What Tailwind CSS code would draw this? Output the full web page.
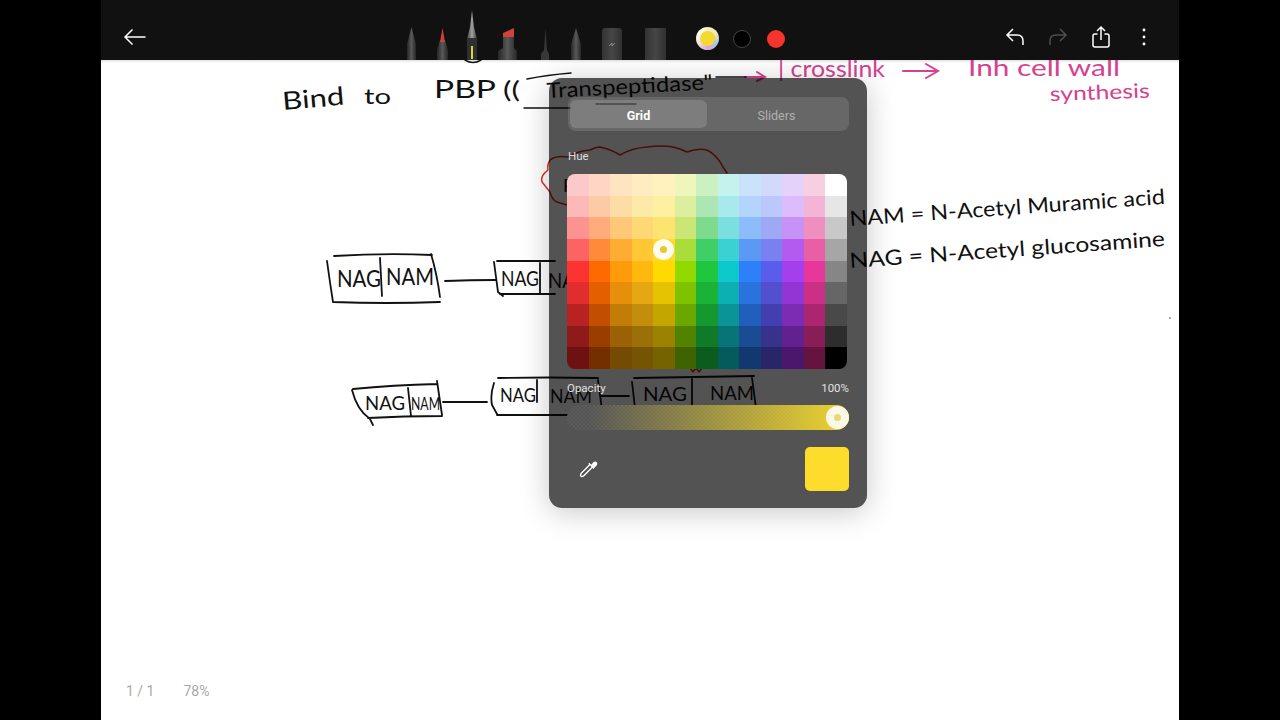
<!DOCTYPE html>
<html lang="en">
<head>
  <meta charset="UTF-8">
  <title>Notes - colour picker</title>
  <script src="https://cdn.jsdelivr.net/npm/@tailwindcss/browser@4"></script>
</head>
<body class="bg-black overflow-hidden [font-family:Roboto,sans-serif]">
  <div class="flex w-[1280px] h-[720px]">
    <div class="w-[101px] shrink-0"></div>
    <div class="w-[1078px] shrink-0 flex flex-col">

      <!-- top bar -->
      <header class="h-[60px] bg-[#111111] flex items-start relative z-10">
        <button class="mt-[25px] ml-[22px] w-[24px] h-6 text-white">
          <svg viewBox="0 0 24 24" class="w-6 h-6" fill="none" stroke="currentColor" stroke-width="1.500"><path d="M22.500 12H2M9.500 4.500 2 12l7.500 7.500"/></svg>
        </button>

        <!-- tools -->
        <svg class="absolute left-[300px] top-0 blur-[0.6px]" width="280" height="60" viewBox="401 0 280 60">
          <defs>
            <linearGradient id="metal" x1="0" x2="1" y1="0" y2="0"><stop offset="0" stop-color="#262626"/><stop offset=".5" stop-color="#585858"/><stop offset="1" stop-color="#262626"/></linearGradient>
            <linearGradient id="bright" x1="0" x2="1" y1="0" y2="0"><stop offset="0" stop-color="#444"/><stop offset=".5" stop-color="#a0a0a0"/><stop offset="1" stop-color="#3a3a3a"/></linearGradient>
            <linearGradient id="eraser" x1="0" x2="1" y1="0" y2="0"><stop offset="0" stop-color="#333"/><stop offset=".5" stop-color="#464646"/><stop offset="1" stop-color="#303030"/></linearGradient>
          </defs>
          <path d="M407 60V44L411.500 27 416 44V60Z" fill="url(#metal)"/>
          <path d="M437 60V50L440 40H445L448 50V60Z" fill="url(#metal)"/>
          <path d="M440 42 442.500 28 445 42Z" fill="#d0413c"/>
          <path d="M467 60V39L470 27 472 10 474 27 477 39V60Z" fill="url(#bright)"/>
          <path d="M467 38h10v22h-10Z" fill="#2f2f2f"/>
          <path d="M471 46h2v13h-2Z" fill="#d8cf4a"/>
          <path d="M498 60V51L503 48V36L514 29V48L517 51V60Z" fill="url(#metal)"/>
          <path d="M503 37V33L514 28V37Z" fill="#d2413a"/>
          <path d="M541 60V54L544 50 545.500 28 547 50 549 54V60Z" fill="#383838"/>
          <path d="M571 60V44L576 28 581 44V60Z" fill="url(#metal)"/>
          <rect x="602" y="28" width="20" height="36" rx="3" fill="url(#eraser)"/>
          <path d="M609 46l3-3v3l3-3" fill="none" stroke="#999" stroke-width=".8"/>
          <rect x="645" y="28" width="21" height="36" rx="1" fill="url(#eraser)"/>
        </svg>

        <!-- colours -->
        <div class="absolute left-[595px] top-[27px] flex items-center gap-[14px]">
          <div class="w-[23px] h-[23px] rounded-full bg-[conic-gradient(#f6f0c8,#f2e8b0,#a9c4e8,#d9a8d8,#f4e0d8,#ffffff,#f6f0c8)] flex items-center justify-center">
            <div class="w-[15px] h-[15px] rounded-full bg-[#f5d92e]"></div>
          </div>
          <div class="w-[18px] h-[18px] rounded-full bg-black border border-[#444444]"></div>
          <div class="ml-[2px] w-[18px] h-[18px] rounded-full bg-[#f5352c]"></div>
        </div>

        <!-- actions -->
        <div class="ml-auto flex items-center gap-[19px] mt-[25px] mr-[23px]">
          <svg viewBox="0 0 24 24" class="w-6 h-6 text-white" fill="none" stroke="currentColor" stroke-width="1.500"><path d="M10 4 4 10l6 6M4 10h10q6 0 6 6v4"/></svg>
          <svg viewBox="0 0 24 24" class="w-6 h-6 text-[#4e4e4e]" fill="none" stroke="currentColor" stroke-width="1.500"><path d="m14 4 6 6-6 6M20 10H10q-6 0-6 6v4"/></svg>
          <svg viewBox="0 0 24 24" class="w-6 h-6 text-white" fill="none" stroke="currentColor" stroke-width="1.500"><path d="M12 15V2M8 6l4-4 4 4M8.500 9H6q-2 0-2 2v9q0 2 2 2h12q2 0 2-2v-9q0-2-2-2h-2.500"/></svg>
          <svg viewBox="0 0 24 24" class="w-6 h-6 text-white" fill="currentColor"><circle cx="12" cy="5" r="1.400"/><circle cx="12" cy="12" r="1.400"/><circle cx="12" cy="19" r="1.400"/></svg>
        </div>
      </header>

      <!-- page -->
      <main class="relative flex-1 bg-white overflow-hidden">
        <div class="absolute inset-x-0 top-0 h-[3px] bg-gradient-to-b from-[#e2e2e2] to-white"></div>

        <svg class="absolute inset-0" width="1078" height="660" viewBox="101 60 1078 660" fill="none" stroke="#111" stroke-width="1.500" stroke-linecap="round">
          <g fill="#111" stroke="none" font-family="Lato, sans-serif">
            <text x="283" y="110" font-size="25" textLength="62" lengthAdjust="spacingAndGlyphs" transform="rotate(-5 283 110)">Bind</text>
            <text x="364" y="104" font-size="22" textLength="27" lengthAdjust="spacingAndGlyphs">to</text>
            <text x="434" y="98" font-size="25" textLength="62" lengthAdjust="spacingAndGlyphs">PBP</text>
            <text x="503" y="98" font-size="24" textLength="17" lengthAdjust="spacingAndGlyphs">((</text>
            <text x="547" y="98" font-size="21" textLength="166" lengthAdjust="spacingAndGlyphs" transform="rotate(-3 547 98)">Transpeptidase"</text>
            <text x="563" y="192" font-size="17" textLength="100" lengthAdjust="spacingAndGlyphs">Pentaglycine</text>
            <text x="337" y="287" font-size="24" textLength="44" lengthAdjust="spacingAndGlyphs">NAG</text>
            <text x="386" y="285" font-size="24" textLength="48" lengthAdjust="spacingAndGlyphs">NAM</text>
            <text x="501" y="286" font-size="21" textLength="38" lengthAdjust="spacingAndGlyphs">NAG</text>
            <text x="548" y="288" font-size="21" textLength="44" lengthAdjust="spacingAndGlyphs">NAM</text>
            <text x="365" y="410" font-size="19" textLength="40" lengthAdjust="spacingAndGlyphs">NAG</text>
            <text x="411" y="410" font-size="17" textLength="29" lengthAdjust="spacingAndGlyphs">NAM</text>
            <text x="500" y="402" font-size="19" textLength="36" lengthAdjust="spacingAndGlyphs">NAG</text>
            <text x="550" y="403" font-size="19" textLength="42" lengthAdjust="spacingAndGlyphs">NAM</text>
            <text x="643" y="401" font-size="20" textLength="44" lengthAdjust="spacingAndGlyphs">NAG</text>
            <text x="710" y="400" font-size="20" textLength="44" lengthAdjust="spacingAndGlyphs">NAM</text>
            <text x="850" y="226" font-size="21" textLength="316" lengthAdjust="spacingAndGlyphs" transform="rotate(-4 850 226)">NAM = N-Acetyl Muramic acid</text>
            <text x="850" y="268" font-size="21" textLength="316" lengthAdjust="spacingAndGlyphs" transform="rotate(-4 850 268)">NAG = N-Acetyl glucosamine</text>
          </g>
          <g fill="#d6418f" stroke="none" font-family="Lato, sans-serif">
            <text x="778" y="77" font-size="23" textLength="107" lengthAdjust="spacingAndGlyphs">| crosslink</text>
            <text x="968" y="76" font-size="24" textLength="152" lengthAdjust="spacingAndGlyphs">Inh cell wall</text>
            <text x="1050" y="101" font-size="20" textLength="100" lengthAdjust="spacingAndGlyphs" transform="rotate(-2 1050 101)">synthesis</text>
          </g>
          <!-- pink arrows -->
          <path d="M745 77h18M757 72l8 5-8 4M903 71h34M926 64l12 7-12 7" stroke="#d6418f" stroke-width="2"/>
          <!-- top line of the bracket -->
          <path d="M527 79q20-4 44-6M524 108h46M596 104h40M716 77h30M465 60q8 5 16 0"/>
          <!-- red cloud -->
          <path d="M568 157q-12-2-18 3-3 5-2 10-8 6-6 12 4 5 8 10 2 8 7 10l10 3M568 157q10-6 22-7 6-3 10-3 10 2 20 8 12-7 27-8 14-2 26 0 8 2 14 5 10-4 20-2 10 5 16 17l4 6" stroke="#e02a2a" stroke-width="1.500"/>
          <path d="M690 368l3 4 3-4 3 4 3-4" stroke="#e02a2a"/>
          <!-- first row of boxes -->
          <path d="M327 261q3 22 6 41M334 256q50-3 98-1M431 254q6 20 9 43M333 302q54 2 107 0M380 258l2 38M445 281q26-1 50-1M494 262l4 30 5 4M497 261h58M500 294h55M540 263v30" stroke-width="1.800"/>
          <!-- second row of boxes -->
          <path d="M352 390q5 20 18 29l3 6M353 389q40-4 84-5M437 381l5 34M368 418q36-2 74-2M408 388l3 28M443 402h44M494 383q-4 12-2 22l5 9M498 378q50-1 100 0M497 415h103M537 380v22M598 380l4 30M601 396h28M632 382l3 26M634 378l120 -2M630 408q50-2 124-2M692 378v36M752 378l4 30" stroke-width="1.800"/>
          <!-- stray dot -->
          <circle cx="1170" cy="318" r="1" fill="#7a8fd0" stroke="none"/>
        </svg>

        <div class="absolute left-[25px] bottom-[20px] flex gap-[29px] text-[14px] leading-[18px] text-[#a8a8a8]">
          <span>1 / 1</span><span>78%</span>
        </div>

        <!-- colour picker -->
        <section class="absolute left-[448px] top-[18px] w-[318px] h-[430px] rounded-[13px] bg-black/[0.675] shadow-[0_4px_30px_rgba(0,0,0,0.22)] px-[18px] pt-[19px]">
          <div class="ml-[1px] w-[281px] h-[34px] rounded-[8px] bg-white/12 p-[3px] pl-[2px] flex text-[12.500px] leading-[31px] text-center">
            <div class="w-[137px] rounded-[6px] bg-white/15 font-bold text-white">Grid</div>
            <div class="flex-1 text-[#b0b0b0]">Sliders</div>
          </div>

          <p class="mt-[19px] ml-[1px] text-[11.500px] leading-[13px] text-[#dddddd]">Hue</p>

          <div id="grid" class="mt-[11px] w-[280px] h-[195px] rounded-[8px] overflow-hidden grid grid-cols-13 grid-rows-9"></div>

          <div class="mt-[13px] flex justify-between text-[11.500px] leading-[13px] text-[#e0e0e0]">
            <span>Opacity</span><span>100%</span>
          </div>

          <div class="relative mt-[10px] w-[282px] h-[25px] rounded-full bg-[repeating-conic-gradient(#5e5e5e_0_25%,#525252_0_50%)] bg-[length:4px_4px]">
            <div class="absolute inset-0 rounded-full bg-gradient-to-r from-[#e6ce32]/0 from-[8%] to-[#eed530]"></div>
            <div class="absolute right-0 top-[1px] w-[23px] h-[23px] rounded-full border-[8px] border-[#fbf8e8] bg-[#e8d878]"></div>
          </div>

          <div class="mt-[17px] flex items-center justify-between">
            <svg viewBox="0 0 24 24" class="ml-[11px] w-5 h-5 text-white" fill="none" stroke="currentColor" stroke-width="1.600"><path d="M14 7 4 17q-1 1-1 3l1 1q2 0 3-1L17 10M13 5l6 6"/><path d="M16 8l3-3.500q2-1.500 3 0t-.5 3L18 11" fill="currentColor"/></svg>
            <div class="w-[44px] h-[44px] rounded-[5px] bg-[#fddc2b]"></div>
          </div>
        </section>
      </main>
    </div>
    <div class="w-[101px] shrink-0"></div>
  </div>

  <script>
    // colour grid, row by row
    const rows = [
      'fbc9c9 ffd6c4 ffe4c2 ffecc0 fff2be eef6bc cbf0c2 c4f2ec cbe2fb d2dafb e4d2fb f6cfe0 ffffff',
      'fbb9b8 fdcaa6 fedca6 feeaa8 fdf09e ddee9e abe6b3 a8eaec b3d5fd bcc8fb dcbcfa f3b5d5 e6e6e6',
      'fd9391 ffab7c ffc878 fed874 fde36f cbe674 7edb8d 7bdfe0 8dbcfa 9fa8f5 c792f5 ee8fc0 c8c8c8',
      'fc6363 ff8a3a ffac33 ffc733 ffd92e a9dd3a 3ed066 3ad1d3 5a9af5 7a80ef b35bee e85fa6 a6a6a6',
      'fb3333 ff6a00 ff9a0a ffb90e ffd900 92d900 1fc63f 0ec9cc 2d80f8 5a5cec a53fed e5389a 868686',
      'e02d2d e55e00 e68f0a e6a812 e6c300 7fc200 1ab338 0cb0b3 2a72dd 5350d0 9334d5 cc2f86 666666',
      'b82222 c24e00 c27c08 c48e0d c4a600 6ca600 149830 0a9497 205fbb 443fb0 7c2bb3 ac2570 494949',
      '8f1a1a 9a3e00 9a6205 9b7008 9b8300 528300 0f7a27 077578 1a4c94 37338d 62218f 881d58 2d2d2d',
      '6d1111 752e00 754a03 755403 756300 3e6300 0b5d1d 055a5c 123870 282668 4a176d 64143f 000000'
    ];
    const grid = document.getElementById('grid');
    rows.forEach((row, r) => {
      row.split(' ').forEach((hex, c) => {
        const cell = document.createElement('div');
        cell.style.background = '#' + hex;
        cell.style.position = 'relative';
        // selected swatch
        if (r === 3 && c === 4) {
          cell.innerHTML = '<div style="position:absolute;left:0;top:0;width:21px;height:21px;border-radius:50%;border:7px solid #fffdf0;background:#e8c832"></div>';
        }
        grid.appendChild(cell);
      });
    });
  </script>
</body>
</html>
